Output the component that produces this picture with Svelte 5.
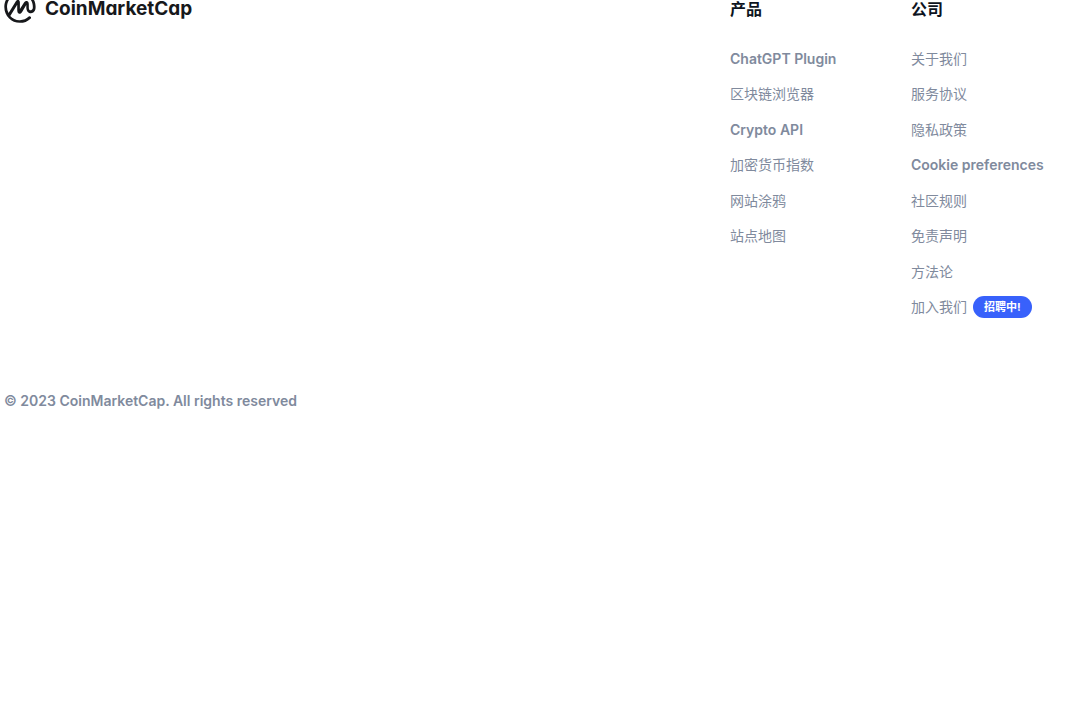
<script lang="ts">
	const columns = [
		{
			title: '产品',
			links: [
				{ text: 'ChatGPT Plugin', latin: true },
				{ text: '区块链浏览器' },
				{ text: 'Crypto API', latin: true },
				{ text: '加密货币指数' },
				{ text: '网站涂鸦' },
				{ text: '站点地图' }
			]
		},
		{
			title: '公司',
			links: [
				{ text: '关于我们' },
				{ text: '服务协议' },
				{ text: '隐私政策' },
				{ text: 'Cookie preferences', latin: true },
				{ text: '社区规则' },
				{ text: '免责声明' },
				{ text: '方法论' },
				{ text: '加入我们', badge: '招聘中!' }
			]
		}
	];
</script>

<footer>
	<div class="top">
		<a class="brand" href="/">
			<svg viewBox="0 0 77 78" aria-hidden="true">
				<path
					d="M66.54,46.41a4.09,4.09,0,0,1-4.17.28c-1.54-.87-2.37-2.91-2.37-5.75V32.45c0-4.09-1.62-7-4.33-7.79-4.58-1.34-8,4.27-9.32,6.38l-8.1,13.11V28.12c-.09-3.69-1.29-5.9-3.56-6.56-1.5-.44-3.75-.26-5.94,3.08L10.64,53.79A32.08,32.08,0,0,1,6.9,38.8c0-17.64,14.13-32,31.46-32s31.45,14.35,31.45,32v.15C70,42.4,68.85,45.13,66.54,46.41ZM76.52,38.8v-.17C76.38,17.26,59.35,0,38.36,0S.25,17.42.25,38.83,17.36,77.67,38.36,77.67a37.69,37.69,0,0,0,25.88-10.27,3.41,3.41,0,0,0,.18-4.78,3.27,3.27,0,0,0-4.61-.21,31.22,31.22,0,0,1-45-1.72L31.7,33.8V46.57c0,6.13,2.34,8.11,4.3,8.69s5,.18,8.1-4.9l9-14.75c.28-.47.54-.87.78-1.21V41c0,5.52,2.18,9.93,6,12.11a10.79,10.79,0,0,0,11-.45C74.73,49.86,76.73,44.89,76.52,38.8Z"
				/>
			</svg>
			<span>CoinMarketCap</span>
		</a>

		{#each columns as column (column.title)}
			<nav aria-label={column.title}>
				<h2>{column.title}</h2>
				<ul>
					{#each column.links as link (link.text)}
						<li>
							<a href="/" class:latin={link.latin}>{link.text}</a>
							{#if link.badge}
								<span class="badge">{link.badge}</span>
							{/if}
						</li>
					{/each}
				</ul>
			</nav>
		{/each}
	</div>

	<p>© 2023 CoinMarketCap. All rights reserved</p>
</footer>

<style>
	:global(body) {
		margin: 0;
		background: #fff;
	}

	footer {
		margin-top: -9px;
		padding: 0 4px;
		color: #808a9d;
		font-family: Inter, 'Noto Sans CJK SC', sans-serif;
		font-size: 14px;
	}

	.top {
		display: grid;
		grid-template-columns: 1fr 181px 155px;
		align-items: start;
	}

	a {
		color: inherit;
		text-decoration: none;
	}

	.brand {
		display: flex;
		align-items: flex-end;
		gap: 9px;
		color: #17181b;
		font-size: 19px;
		font-weight: 700;
		font-feature-settings: 'cv11';
		line-height: 28px;
	}

	.brand svg {
		width: 32px;
		height: 32px;
		fill: currentColor;
	}

	h2 {
		margin: 6px 0 20px;
		color: #0d1421;
		font-size: 16px;
		font-weight: 700;
		line-height: 24px;
	}

	ul {
		display: grid;
		grid-template-rows: repeat(8, 1fr);
		height: 284px;
		margin: 0;
		padding: 0;
		list-style: none;
	}

	li {
		display: flex;
		align-items: center;
		gap: 6px;
		line-height: 20px;
		white-space: nowrap;
	}

	.latin {
		font-weight: 600;
	}

	.badge {
		padding: 0 11px;
		border-radius: 11px;
		background: #3861fb;
		color: #fff;
		font-size: 11px;
		font-weight: 700;
		line-height: 22px;
	}

	p {
		margin: 66px 0 0;
		font-weight: 600;
		line-height: 20px;
	}
</style>
